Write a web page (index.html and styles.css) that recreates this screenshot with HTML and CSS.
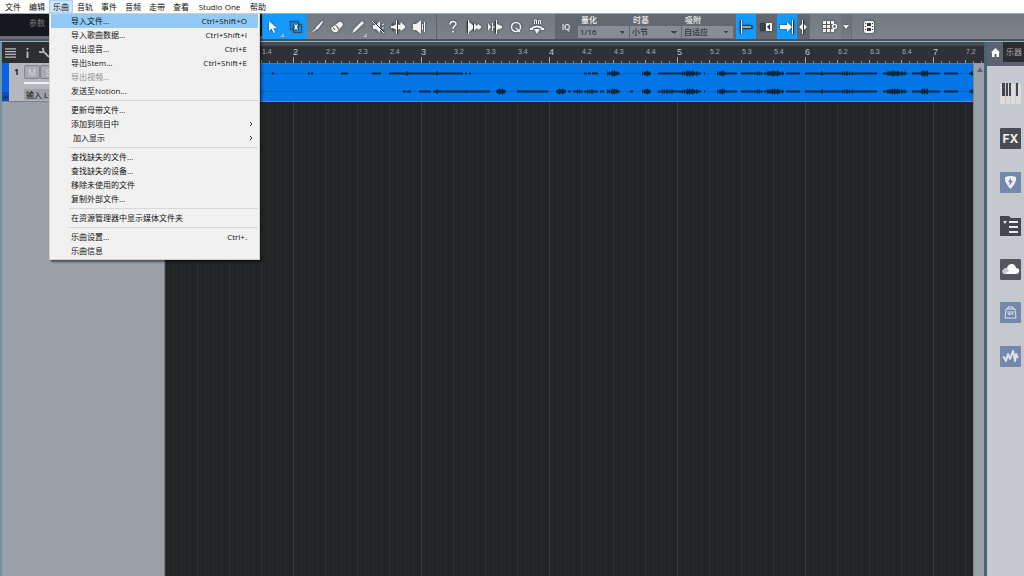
FILE: index.html
```
<!DOCTYPE html>
<html lang="zh">
<head>
  <meta charset="UTF-8">
  <meta name="viewport" content="width=device-width, initial-scale=1.0">
  <title>Studio One</title>
  <link rel="stylesheet" href="styles.css">
</head>
<body>
  <nav class="menubar">
    <button>文件</button>
    <button>编辑</button>
    <div class="menu-holder">
      <button class="open">乐曲</button>
      <div class="menu">
        <button class="menu-item active">导入文件...<span>Ctrl+Shift+O</span></button>
        <button class="menu-item">导入歌曲数据...<span>Ctrl+Shift+I</span></button>
        <button class="menu-item">导出混音...<span>Ctrl+E</span></button>
        <button class="menu-item">导出Stem...<span>Ctrl+Shift+E</span></button>
        <button class="menu-item" disabled>导出视频...</button>
        <button class="menu-item">发送至Notion...</button>
        <hr>
        <button class="menu-item">更新母带文件...</button>
        <button class="menu-item">添加到项目中<svg width="4" height="6"><path d="M1 1l2 2-2 2"/></svg></button>
        <button class="menu-item indent">加入显示<svg width="4" height="6"><path d="M1 1l2 2-2 2"/></svg></button>
        <hr>
        <button class="menu-item">查找缺失的文件...</button>
        <button class="menu-item">查找缺失的设备...</button>
        <button class="menu-item">移除未使用的文件</button>
        <button class="menu-item">复制外部文件...</button>
        <hr>
        <button class="menu-item">在资源管理器中显示媒体文件夹</button>
        <hr>
        <button class="menu-item">乐曲设置...<span>Ctrl+.</span></button>
        <button class="menu-item">乐曲信息</button>
      </div>
    </div>
    <button>音轨</button>
    <button>事件</button>
    <button>音频</button>
    <button>走带</button>
    <button>查看</button>
    <button class="wide">Studio One</button>
    <button>帮助</button>
  </nav>

  <header class="toolbar">
    <div class="params">参数</div>
    <div class="tools select-tools">
      <button aria-label="箭头工具"><svg viewBox="0 0 16 16"><path class="fill" d="M4 2v10l2.600-2.300L8.500 14l1.800-.8-1.900-4H12z"/></svg><i class="corner"></i></button>
      <button aria-label="范围工具"><svg viewBox="0 0 16 16"><path class="dark" stroke-dasharray="2 1" d="M2.500 2.500h8v8h-8z"/><path class="dark" stroke-dasharray="2 1" d="M5.500 5.500h8v8h-8z"/><path class="fill" d="M6 5l2 1 2-1-1 3 1 3-2-1-2 1 1-3z"/></svg></button>
    </div>
    <div class="tools edit-tools">
      <button aria-label="分割工具"><svg viewBox="0 0 16 16"><path class="fill" d="M13 2l1 1-5 7-3 1 1-3zM2 14l4-4 1 1z"/></svg></button>
      <button aria-label="橡皮工具"><svg viewBox="0 0 16 16"><path class="fill" d="M10 3q3-1 4 3l-6 7q-5 1-6-4z"/><path class="dark" d="M6.500 6.500q3 1 3 4M4 9q1 0 2 2"/></svg></button>
      <button aria-label="绘制工具"><svg viewBox="0 0 16 16"><path class="fill" d="M12 2l2 2-8 8-4 2 2-4z"/></svg><i class="corner"></i></button>
      <button aria-label="静音工具"><svg viewBox="0 0 16 16"><path class="fill" d="M3 6h3l4-4v12l-4-4H3z"/><path class="dark" d="M3 2l11 11"/><path d="M2 2l12 12M12 6l2-1M12 9h2"/></svg></button>
      <button aria-label="弯曲工具"><svg viewBox="0 0 16 16"><path class="fill" d="M1 7h2l4-2 3 1 1-3 4 4v2l-4 3-1-2-3 1-4-2H1z"/><path d="M6.500 1v14"/><path class="dark" d="M7.500 1v14M2 5h2M2 11h2"/></svg></button>
      <button aria-label="试听工具"><svg viewBox="0 0 16 16"><path class="fill" d="M2 5h3l5-4v14l-5-4H2z"/><path d="M11.500 5v6M13.500 3v10"/></svg></button>
    </div>
    <div class="tools extra-tools">
      <button aria-label="帮助"><svg viewBox="0 0 16 16"><path stroke-width="1.500" d="M5 5.500c0-4 6-4 6-.5 0 2-3 2-3 5M8 11.500v2"/></svg></button>
      <button aria-label="剥离静音"><svg viewBox="0 0 16 16"><path d="M2.500 1v14"/><path class="fill" d="M3 3l5 4V4l3 3 1-2 3 2v2l-3 2-1-2-3 3V9l-5 4z"/><path class="dark" d="M1.500 2v12M7.500 4v8"/></svg></button>
      <button aria-label="音频弯曲"><svg viewBox="0 0 16 16"><path class="fill" d="M1 4l3 4-3 4zM10 5l5 2v2l-5 2z"/><path d="M5.500 4v8M9.500 1v14M5 8h5"/><path class="dark" d="M8.500 2v12"/></svg></button>
      <button aria-label="量化面板"><svg viewBox="0 0 16 16"><circle stroke-width="1.500" cx="8" cy="8" r="4.500"/><path stroke-width="1.500" d="M8 9l4 4"/></svg></button>
      <button aria-label="宏"><svg viewBox="0 0 16 16"><path d="M5.500 5V1h2v4M9.500 5V1.500h2V5"/><path class="bold" d="M2 10q6-5 12 0"/><path class="fill" d="M5 10h6l-3 5zM1 9h3v2H1zM12 9h3v2h-3z"/></svg></button>
    </div>
    <div class="quantize">
      <button class="iq">IQ</button>
      <label>量化<select><option>1/16</option></select></label>
      <label>时基<select><option>小节</option></select></label>
      <label>吸附<select><option>自适应</option></select></label>
    </div>
    <div class="tools snap-tools">
      <button class="on" aria-label="吸附"><svg viewBox="0 0 16 16"><path class="dark" d="M2.500 1v14M5 6.500h9v3H5z"/><path d="M3.500 1v14M4 8h9"/></svg></button>
      <button aria-label="自动滚动"><svg viewBox="0 0 16 16"><path class="dark" d="M2.500 4.500h4v7h-4zM4.500 5v6"/><path class="fill" d="M8 4h6v8H8z"/><path class="black" d="M12 5v6L9 8z"/></svg></button>
      <button class="on" aria-label="跟随"><svg viewBox="0 0 16 16"><path class="fill" d="M1 6h7V3l5 5-5 5v-3H1z"/><path d="M13.500 1v14"/><path class="dark" d="M14.500 1v14"/></svg></button>
      <button class="narrow" aria-label="光标"><svg viewBox="0 0 16 16"><path d="M7.500 1v14"/><path class="dark" d="M8.500 1v14"/><path class="fill" d="M4 8l3-3v6zM12 8L9 5v6z"/></svg></button>
    </div>
    <div class="tools view-tools">
      <button class="grid-btn" aria-label="网格"><svg viewBox="0 0 16 16"><path class="fill" d="M1 2h3v3H1zM5 2h3v3H5zM9 2h3v3H9zM1 6h3v3H1zM5 6h3v3H5zM1 10h3v3H1zM5 10h3v3H5zM9 10h3v3H9z"/><circle stroke-width="1.500" cx="12.500" cy="7.500" r="2"/></svg></button>
      <button class="caret-btn" aria-label="更多"><svg viewBox="0 0 8 8"><path class="fill" d="M1 2h6L4 6z"/></svg></button>
      <button class="film-btn" aria-label="视频"><svg viewBox="0 0 16 16"><rect class="fill" x="3" y="2" width="10" height="12" rx="2"/><path class="black" d="M6 4h4v3H6zM6 9h4v3H6zM4 4h1v1H4zM4 7h1v1H4zM4 10h1v1H4zM11 4h1v1h-1zM11 7h1v1h-1zM11 10h1v1h-1z"/></svg></button>
    </div>
  </header>

  <main class="workspace">
    <section class="tracks">
      <div class="tracks-head">
        <button aria-label="菜单"><svg viewBox="0 0 12 12"><path stroke-width="1.500" d="M0 2h12M0 5h12M0 8h12M0 11h12"/></svg></button>
        <button aria-label="检查器"><svg viewBox="0 0 12 12"><path stroke-width="2" d="M6 5v7M6 1v2"/></svg></button>
        <button aria-label="选项"><svg viewBox="0 0 12 12"><path stroke-width="2" d="M0 5c4 2 6 0 4-4M5 5l6 6"/></svg></button>
      </div>
      <div class="track">
        <div class="track-color"><svg width="7" height="6"><path d="M1 4l2-3 1 3 2-3"/></svg></div>
        <div class="track-number">1</div>
        <div class="track-body">
          <div class="ms"><button>M</button><button>S</button></div>
          <div class="volume"></div>
          <div class="input-name">输入 L+R</div>
        </div>
      </div>
    </section>

    <section class="arrange">
      <div class="overview"></div>
      <div class="ruler" id="ruler"></div>
      <div class="arrange-body">
        <div class="grid">
          <div class="clip"><svg class="wave"><path class="zero" d="M0 9.500H2000M0 27.500H2000"/><path id="wave"/></svg></div>
        </div>
        <div class="scrollbar"><svg width="6" height="5"><path d="M0 5l3-5 3 5z"/></svg></div>
      </div>
    </section>

    <aside class="browser">
      <div class="tabs">
        <button class="home" aria-label="主页"><svg width="9" height="9"><path d="M4.500 0L9 4.500H8V9H5.500V6h-2v3H1V4.500H0z"/></svg></button>
        <button>乐器</button>
      </div>
      <button class="piano" aria-label="乐器"><svg viewBox="0 0 21 23"><path fill="#dddcda" d="M0 2h5v20H0zM6 2h4v20H6zM11 2h4v20h-4zM16 2h5v20h-5z"/><path fill="#44464c" d="M2 1h3v13H2zM6 1h2v13H6zM9 1h2v13H9zM16 1h2v13h-2z"/></svg></button>
      <div class="shelf">
        <button class="fx">FX</button>
        <button class="blue" aria-label="循环"><svg viewBox="0 0 21 21"><path fill="#eceff3" d="M5 5q5.500-2 11 0 1 5-5.500 12Q4 10 5 5z"/><path fill="#6d82a8" d="M11 6l-3 4h2l-1 4 4-5h-2z"/></svg></button>
        <button class="files" aria-label="文件"><svg viewBox="0 0 21 21"><path fill="#44474e" d="M0 1h9l2 2h10v18H0z"/><path stroke="#e8e9eb" stroke-width="2" d="M9 7h9M9 12h9M9 17h9"/><path fill="#e8e9eb" d="M3 6h4L5 9z"/></svg></button>
        <button class="cloud" aria-label="云"><svg viewBox="0 0 21 21"><path fill="#fff" d="M5 15q-4-1-2-4 1-2 4-2 1-4 5-4 3 0 4 4 4 0 3 4-1 2-3 2z"/><path fill="#c3cbd3" d="M5 15q-4-1-2-4 1-2 4-2l2 3z"/></svg></button>
        <button class="blue" aria-label="商店"><svg viewBox="0 0 21 21"><path class="line" d="M6 7h9l1 9H5zM8 7V5h5v2M7 10h7M8 13l1-2 1 2 2-2 1 2"/></svg></button>
        <button class="blue" aria-label="音频池"><svg viewBox="0 0 21 21"><path class="line" stroke-width="2" stroke-linejoin="round" d="M3 12l1-1 2 4 2-7 2 5 3-8 2 10 1-7 2 4"/></svg></button>
      </div>
    </aside>
  </main>

  <script>
    // 每小节 4 拍，前几拍不标注
    const BEATS = 26;
    const FIRST_LABEL = 3;
    const ruler = document.getElementById('ruler');
    for (let i = 0; i < BEATS; i++) {
      const bar = Math.floor(i / 4) + 1;
      const beat = i % 4 + 1;
      const cls = beat === 1 ? 'beat bar' : 'beat';
      const label = beat === 1 ? bar : bar + '.' + beat;
      ruler.insertAdjacentHTML('beforeend', `<span class="${cls}">${i < FIRST_LABEL ? '' : label}</span>`);
    }

    // 波形片段: [起点, 终点, 振幅]
    const common = [
      [642, 651, 3], [680, 701, 3], [704, 705, 1], [717, 727, 3], [727, 737, 1], [741, 753, 1], [753, 763, 2],
      [764, 784, 3], [786, 800, 1], [805, 820, 1], [820, 823, 2], [823, 833, 1], [833, 858, 2], [858, 877, 1],
      [883, 907, 3], [912, 920, 1], [920, 930, 3], [930, 940, 1], [944, 958, 1], [969, 974, 2]
    ];
    const left = [
      [272, 274, 1], [308, 310, 1], [311, 313, 1], [341, 348, 1], [372, 381, 1], [389, 403, 1], [403, 411, 2],
      [411, 433, 1], [433, 441, 2], [441, 463, 1], [465, 467, 1], [469, 471, 1], [584, 587, 1], [588, 591, 1],
      [592, 598, 1], [607, 620, 3], [658, 680, 1]
    ];
    const right = [
      [403, 406, 1], [407, 411, 1], [419, 431, 1], [433, 441, 2], [441, 490, 1], [465, 467, 2], [496, 506, 3],
      [517, 548, 1], [556, 566, 3], [568, 571, 1], [573, 583, 2], [584, 598, 2], [600, 604, 1], [607, 620, 3],
      [630, 633, 1], [658, 680, 2]
    ];
    const ORIGIN = 165;

    function drawChannel(segments, y) {
      let d = '';
      segments.forEach(([from, to, amp]) => {
        for (let x = from; x < to; x++) {
          const shape = Math.sin((x - from + 1) / (to - from + 1) * Math.PI);
          const jitter = (x * 7 % 5) / 5;
          const h = Math.max(1, Math.round(amp * (0.6 * shape + 0.5 * jitter)));
          d += `M${x - ORIGIN + 0.5} ${y - h}v${h * 2}`;
        }
      });
      return d;
    }
    const wave = document.getElementById('wave');
    wave.setAttribute('d', drawChannel(left.concat(common), 9.5) + drawChannel(right.concat(common), 27.5));
  </script>
</body>
</html>
```
FILE: styles.css
```
/* 基本样式 */
* { box-sizing: border-box; }
body { margin: 0; height: 100vh; display: flex; flex-direction: column; overflow: hidden; font-family: "Open Sans", "Noto Sans CJK SC", sans-serif; font-size: 8px; line-height: 12px; color: #111; background: #222425; }
button { margin: 0; padding: 0; border: 0; background: none; font: inherit; color: inherit; }
svg { display: block; fill: none; flex: none; }

/* 菜单栏 */
.menubar { display: flex; height: 13px; padding-left: 1px; background: #fff; flex: none; }
.menubar > button, .menu-holder > button { width: 24px; height: 13px; }
.menubar .wide { width: 53px; }
.menu-holder { position: relative; }
.menu-holder .open { background: #cce8ff; border: 1px solid #a6d5fa; line-height: 10px; }
.menu { position: absolute; z-index: 5; top: 13px; left: 0; width: 211px; padding: 0 1px 1px; background: #f1f1f1; border: 1px solid #d0d0d0; box-shadow: 2px 2px 2px rgba(0, 0, 0, .5); }
.menu-item { display: flex; align-items: center; width: 100%; height: 14px; padding: 0 11px 0 20px; text-align: left; }
.menu-item span { margin-left: auto; }
.menu-item svg { margin-left: auto; margin-right: -6px; stroke: #333; }
.menu-item.indent { padding-left: 22px; }
.menu-item.active { background: #91c9f7; }
.menu-item:disabled { color: #8d8d8d; }
.menu hr { margin: 2px 0 2px 18px; border: 0; border-top: 1px solid #d9d9d9; }

/* 工具栏 */
.toolbar { display: flex; flex: none; height: 28px; background: linear-gradient(#727980, #7c838a); border-top: 1px solid #a5a9ad; border-bottom: 2px solid #4c5158; }
.params { width: 262px; padding: 3px 0 0 29px; background: #15191e; color: #777b80; border-bottom: 3px solid #686d74; }
.tools { display: flex; }
.tools button { position: relative; flex: 1; display: flex; align-items: center; justify-content: center; }
.tools svg { width: 16px; height: 16px; stroke: #f2f2f2; filter: drop-shadow(0 0 1px rgba(20, 24, 28, .7)); }
.tools .fill { fill: #f2f2f2; stroke: none; }
.tools .dark { stroke: #33383d; }
.tools .black { fill: #33383d; stroke: none; }
.tools .bold { stroke-width: 2; }
.corner { position: absolute; right: 1px; bottom: 2px; border: 2px solid transparent; border-right-color: #aeb4b9; border-bottom-color: #aeb4b9; }
.select-tools { width: 45px; background: #159bff; }
.edit-tools { width: 130px; padding-right: 7px; border-right: 1px solid #5f656c; }
.extra-tools { width: 118px; padding: 0 8px 0 6px; }
.quantize { display: flex; width: 181px; background: #626870; color: #f0f0f0; }
.quantize .iq { width: 22px; margin-right: 1px; color: #e6e8ea; font-weight: 600; }
.quantize label { width: 51px; margin-right: 1px; padding-left: 3px; font-weight: 500; }
.quantize select { display: block; width: 51px; height: 12px; margin-left: -3px; padding: 0 2px; border: 0; border-radius: 0; font: inherit; font-weight: 400; line-height: 12px; color: #15181c; appearance: none; background: #878d95 conic-gradient(from 315deg at 50% 100%, #41464c 90deg, transparent 0) no-repeat right 4px center / 6px 3px; }
.snap-tools { width: 74px; background: #626870; }
.snap-tools .on { background: #159bff; }
.snap-tools .narrow { flex: 0 0 13px; overflow: hidden; }
.view-tools { flex: 1; }
.view-tools .grid-btn { flex: 0 0 31px; padding-left: 9px; }
.view-tools .caret-btn { flex: 0 0 11px; background: rgba(0, 0, 0, .06); border-right: 1px solid #666c73; }
.view-tools .caret-btn svg { width: 8px; height: 8px; }
.view-tools .film-btn { flex: 0 0 33px; }

/* 工作区 */
.workspace { display: flex; flex: 1; min-height: 0; border-top: 1px solid #8fb4c2; }
.tracks { width: 165px; border-left: 2px solid #7194a2; border-right: 1px solid #777b82; background: #9b9fa9; flex: none; }
.tracks-head { display: flex; align-items: center; height: 21px; padding-left: 3px; gap: 6px; background: #2d2f33; }
.tracks-head svg { width: 11px; height: 11px; stroke: #b7b9bc; }
.track { display: flex; height: 39px; background: #b4b7bd; border-bottom: 1px solid #7b7f87; }
.track-color { display: flex; align-items: flex-end; width: 7px; background: linear-gradient(#0763e4 29px, #0850b4 29px); }
.track-color svg { stroke: #0b2f6e; }
.track-number { width: 15px; padding-top: 3px; text-align: center; font-weight: bold; }
.track-body { flex: 1; padding-top: 2px; }
.ms { display: flex; }
.ms button { width: 16px; height: 14px; border: 1px solid #7f838a; border-radius: 2px; background: #a6a9af; color: #d4d6da; font-size: 9px; line-height: 11px; }
.volume { height: 2px; margin: 3px 0 5px; background: #f0f1f2; }
.input-name { height: 11px; padding-left: 2px; background: #9da0a7; line-height: 11px; }

/* 编排区 */
.arrange { display: flex; flex-direction: column; flex: 1; min-width: 0; }
.overview { height: 4px; background: #464b51; flex: none; }
.ruler { display: flex; height: 17px; overflow: hidden; flex: none; color: #a9abae; background: repeating-linear-gradient(90deg, #85878a 0 1px, transparent 1px 8px) 0 100% / 100% 2px no-repeat, #2f3136; font-family: "Liberation Sans", Arial, sans-serif; font-size: 7px; line-height: 12px; }
.beat { flex: 0 0 32px; padding-left: 1px; background: linear-gradient(#a0a2a5, #a0a2a5) 0 100% / 1px 3px no-repeat; }
.beat.bar { padding-left: 0; font-size: 9px; color: #c4c6c8; background-size: 1px 6px; }
.arrange-body { display: flex; flex: 1; min-height: 0; }
.grid { flex: 1; min-width: 0; background: repeating-linear-gradient(90deg, #36393b 0 1px, transparent 1px 128px), repeating-linear-gradient(90deg, #2e3132 0 1px, transparent 1px 32px), repeating-linear-gradient(90deg, #272a2b 0 1px, transparent 1px 8px), #222425; }
.clip { height: 39px; background: #0276e6; border-top: 1px solid #0999c5; border-bottom: 1px solid #00b4e8; }
.wave { width: 100%; height: 37px; }
.wave path { stroke: #06273d; }
.wave .zero { stroke: #0365c4; }
.scrollbar { width: 11px; padding: 4px 0 0 3px; background: #9b9fa7; border-left: 1px solid #7e838a; }
.scrollbar path { fill: #62666d; }

/* 浏览器面板 */
.browser { width: 40px; border-left: 3px solid #426773; background: #c5c8cf; flex: none; }
.tabs { display: flex; height: 24px; background: #2c2d31; border-bottom: 4px solid #5c6270; color: #a7a9ae; }
.tabs .home { width: 16px; padding-left: 4px; background: #5c6270; }
.tabs .home path { fill: #fff; }
.tabs button { padding-left: 3px; white-space: nowrap; }
.piano { display: block; margin: 16px 0 0 13px; }
.piano svg { width: 21px; height: 23px; }
.shelf { display: flex; flex-direction: column; justify-content: space-between; height: 239px; margin: 23px 0 0 13px; }
.shelf button { width: 21px; height: 21px; border-radius: 1px; }
.shelf svg { width: 21px; height: 21px; }
.shelf .fx { background: #484b53; color: #eee; font-family: Inter, sans-serif; font-size: 12px; font-weight: bold; }
.shelf .blue { background: #7488ab; }
.shelf .cloud { background: #53565b; }
.line { stroke: #dce1ea; }
```
